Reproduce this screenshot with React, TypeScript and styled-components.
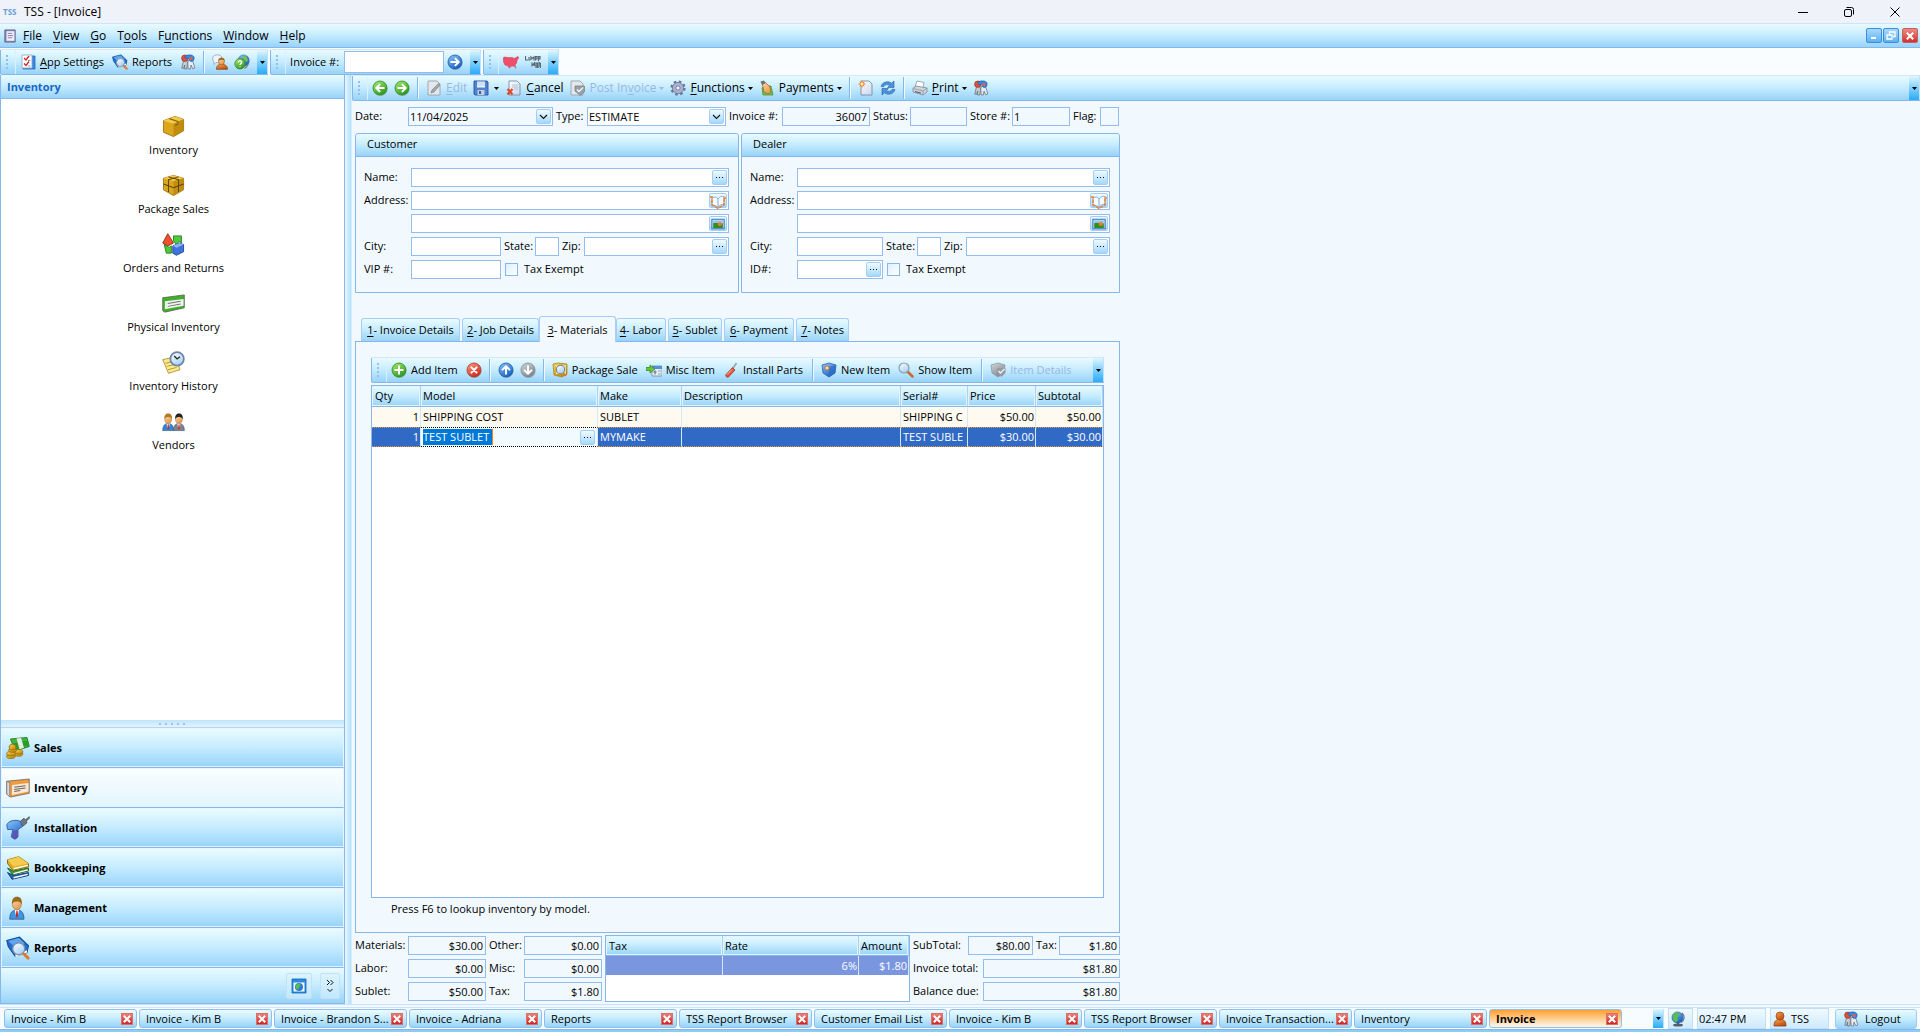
import React, { ReactNode } from "react";
import styled, { createGlobalStyle, css } from "styled-components";

const line = "#86b6ea";
const fieldLine = "#92bdee";
const pale = "#f1f9ff";
const bar = "linear-gradient(#e9fbff, #c6ecff 48%, #98d3f8)";
const uiFont = `"Open Sans", "Noto Sans", sans-serif`;

const GlobalStyle = createGlobalStyle`
  * { box-sizing: border-box; }
  html, body { margin: 0; height: 100%; }
  body { font: 11px/16px ${uiFont}; color: #000; background: ${pale}; overflow: hidden; }
  button, input, select { font: inherit; color: inherit; margin: 0; padding: 0; border: 0; background: none; border-radius: 0; outline: 0; }
  button { white-space: nowrap; }
  svg { display: block; flex: none; }
  u { text-underline-offset: 2px; }
`;

/* ---------- icons ---------- */

const Defs = () => (
  <svg width="0" height="0" style={{ position: "absolute" }} aria-hidden="true">
    <defs>
      {[
        ["gGreen", "#a9ee74", "#2f9a1d"],
        ["gBlue", "#8cc8fb", "#1c62c4"],
        ["gRed", "#ff9d85", "#cf2c1a"],
        ["gGray", "#d4d8dc", "#7f868d"],
        ["gGold", "#f9d65c", "#c48a0a"],
        ["gSkin", "#ffd9a8", "#e59a4f"],
        ["gOrange", "#f7a64b", "#bf4f14"],
        ["gPaper", "#ffffff", "#cfdcef"],
        ["gLens", "#ffffff", "#a8d2f4"],
      ].map(([id, a, b]) => (
        <linearGradient key={id} id={id} x1="0" y1="0" x2="0.6" y2="1">
          <stop offset="0" stopColor={a} />
          <stop offset="1" stopColor={b} />
        </linearGradient>
      ))}
    </defs>
  </svg>
);

const disc = (fill: string, edge: string, mark: string, turn = 0) => (
  <>
    <circle cx="8.5" cy="9" r="7" fill="#5b6b7a" opacity=".35" />
    <circle cx="8" cy="8" r="7" fill={`url(#${fill})`} stroke={edge} strokeWidth=".8" />
    <path d={mark} transform={`rotate(${turn} 8 8)`} fill="none" stroke="#fff" strokeWidth="2" strokeLinejoin="round" strokeLinecap="round" />
  </>
);
const arrowMark = "M4.2 8h7.4M8.4 4.6 11.8 8l-3.4 3.4";
const sheet = (
  <path d="M3 1h8l3 3v11H3z" fill="url(#gPaper)" stroke="#7c8ba3" strokeWidth=".9" />
);
const graySheet = <path d="M2 1h9l3 3v11H2z" fill="#e4e8ec" stroke="#9aa2ab" strokeWidth=".9" />;
const person = (x: number, hair: string, coat: string, s = 1, y = 0) => (
  <g transform={`translate(${x} ${y}) scale(${s})`}>
    <path d="M0 15c0-4 1.6-6 4.6-6s4.6 2 4.6 6z" fill={coat} stroke="#34507a" strokeWidth=".5" />
    <path d="M3.2 9h2.800l-.8 4h-1.2z" fill="#fff" />
    <path d="M4.3 9.6h.8l.3 3.4-.8 1-.7-1z" fill="#c8281c" />
    <ellipse cx="4.6" cy="5.4" rx="2.9" ry="3.5" fill="url(#gSkin)" stroke="#b06e2c" strokeWidth=".4" />
    <path d="M1.5 5.4C1.100 2.200 2.600.5 4.700.5s3.600 1.700 3.100 4.900C7 4 6 3.400 4.800 3.600 3.400 3.600 2 4 1.500 5.400z" fill={hair} />
  </g>
);

const ICONS: Record<string, ReactNode> = {
  checklist: (
    <>
      <path d="M3 2h12v13H3z" fill="#3d8be0" stroke="#2567b5" strokeWidth=".8" />
      <path d="M2 1h10v13H2z" fill="#fbfdff" stroke="#8aa5c8" strokeWidth=".8" />
      <path d="m4 4 2 2 3-4M4 9.500l2 2 3-4" fill="none" stroke="#d3261d" strokeWidth="1.300" />
      <path d="M8 6.500h2.500M8 12h2.500" stroke="#8c9bb0" />
    </>
  ),
  report: (
    <>
      <path d="M.5 3 9 .8l6 5.700L14 11l-8 2.500L1.500 7z" fill="#1f6fd0" stroke="#154c94" strokeWidth=".7" />
      <path d="m1.500 3.300 7-2 4 3.700-7 2z" fill="#5ea7f0" />
      <path d="m6 12.500 8-3v1.500l-7.500 2.800z" fill="#fff" />
      <circle cx="8.500" cy="8.500" r="4" fill="url(#gLens)" stroke="#7d93ac" strokeWidth=".9" />
      <path d="m12 12 2.700 2.700" stroke="#e2772b" strokeWidth="2" strokeLinecap="round" />
    </>
  ),
  team: (
    <>
      <path d="M3.500 6.500 6.800 6l.7 3-.7 6H4.600V11l-1 3.500-1.800-.4z" fill="#c6ccd3" stroke="#5f6975" strokeWidth=".7" />
      <path d="m8.500 6.500 4-.5 2.300 8-2 .8L11 11l-.6 4H8.300L7.700 9z" fill="#e9edf0" stroke="#5f6975" strokeWidth=".7" />
      <circle cx="4.800" cy="4.200" r="3.200" fill="#e0503a" stroke="#8e2a1a" strokeWidth=".6" />
      <path d="M5 2.500C6 .5 13 0 14 3c.6 2-.6 4.600-2.600 4.600C9 7.600 9.800 4 7.600 4.600 6 5 4.600 4 5 2.500z" fill="#2f8be2" stroke="#1a549c" strokeWidth=".6" />
      <circle cx="11" cy="4.400" r="1.600" fill="#e95c48" />
    </>
  ),
  chatUser: (
    <>
      <path d="M.6 4.500c0-5 9.400-5 9.400 0s-4 4-6 4l-2 2V8C1.200 7 .6 6 .6 4.500z" fill="#eef3fa" stroke="#8798b4" strokeWidth=".7" />
      <path d="M4.500 15.300c0-4 2-5 5-5s6 1 6 5z" fill="url(#gOrange)" stroke="#8c3c10" strokeWidth=".7" />
      <ellipse cx="9.500" cy="7.200" rx="3" ry="3.500" fill="url(#gSkin)" stroke="#a55d1c" strokeWidth=".6" />
      <path d="M6.400 6.800c0-3.600 6.200-3.600 6.200 0-2-1.300-4.200-1.300-6.200 0z" fill="#9a621f" />
    </>
  ),
  globeHelp: (
    <>
      <path d="M12.500 2c3.500 3 3 9-2 12.500" fill="none" stroke="#7c8894" strokeWidth="1.400" />
      <circle cx="9.500" cy="6.500" r="5.500" fill="url(#gBlue)" stroke="#3c6da8" strokeWidth=".7" />
      <path d="M9 1.200c3 .5 5 3 4.500 6.500L11 7 9 4z" fill="#72c44e" />
      <circle cx="6" cy="9.800" r="5.200" fill="url(#gGreen)" stroke="#2e7f1f" strokeWidth=".7" />
      <path d="M4.400 8.400c0-2.200 3.400-2 3.200 0 0 1.200-1.600 1.200-1.600 2.600M6 12.400v.8" fill="none" stroke="#fff" strokeWidth="1.400" />
    </>
  ),
  goBlue: disc("gBlue", "#1c559e", arrowMark),
  upBlue: disc("gBlue", "#1c559e", arrowMark, -90),
  downGray: disc("gGray", "#7f868d", arrowMark, 90),
  back: disc("gGreen", "#2b8a1c", arrowMark, 180),
  forward: disc("gGreen", "#2b8a1c", arrowMark),
  add: disc("gGreen", "#2b8a1c", "M8 4.200v7.600M4.200 8h7.600"),
  remove: disc("gRed", "#a83222", "m5.400 5.400 5.200 5.200M10.600 5.400l-5.200 5.200"),
  usa: (
    <path d="M0 4.500 1 3l5 .6 3.500-.2 1.500 1.200L15 2.500l.8 1.300L14.200 6l-.6 3L12 11l1 3.300L11 12l-3 .2-1.600 2L5 12 2 11 .5 8z" fill="#ee4f68" stroke="#d43a55" strokeWidth=".5" />
  ),
  express: (
    <g fill="none" stroke="#5c6873" strokeWidth="1.200">
      <path d="M.5 2v4H3M4 3v3h1.500M6 6V3l1.500 1.500L9 3v3.500M10.500 6.500v-4H12V5h-1.500M13.500 7V2.500H15V5h-1.500" />
      <path d="M7 8.500v3l1.500-1.500 1 2v-4M11 14V9h1.500v5M11 12h1.500M14 14V8.500l1.500 1V14" />
    </g>
  ),
  edit: (
    <>
      {graySheet}
      <path d="M12.500 3.500 6 10l-1 3 3-1 6-7z" fill="#a4abb3" stroke="#79818a" strokeWidth=".7" />
    </>
  ),
  save: (
    <>
      <path d="M1 1h13l1 1v13H2l-1-1z" fill="#4f83cf" stroke="#28549c" strokeWidth=".9" />
      <path d="M4 1.500h8v6H4z" fill="#eaf3ff" />
      <path d="M4 3h8M4 5h8" stroke="#9ebbe2" strokeWidth=".7" />
      <path d="M4.500 10h7v5h-7z" fill="#c3cddb" />
      <path d="M6 11h2v3H6z" fill="#3a5f9a" />
    </>
  ),
  cancelDoc: (
    <>
      {sheet}
      <path d="M6 5h6M6 7h6M8 9h4" stroke="#a8b5c9" strokeWidth=".8" />
      <path d="m1.500 9 5 5.500M6.500 9l-5 5.500" stroke="#e04a2c" strokeWidth="2.200" />
    </>
  ),
  post: (
    <>
      {graySheet}
      <path d="M6 6h9l1 1v4l-4.600 4.500L6 11z" fill="#98a1aa" stroke="#6f7983" strokeWidth=".7" />
      <path d="m8 9.500 2 2 4-4" fill="none" stroke="#f2f5f7" strokeWidth="1.400" />
    </>
  ),
  gear: (
    <>
      <circle cx="8" cy="8" r="6.300" fill="none" stroke="#6b7495" strokeWidth="2.600" strokeDasharray="2.500 2.450" />
      <circle cx="8" cy="8" r="5.600" fill="#aab2cf" stroke="#6b7495" strokeWidth=".8" />
      <circle cx="8" cy="8" r="2.100" fill="#eef4fb" stroke="#6b7495" strokeWidth=".8" />
    </>
  ),
  payHand: (
    <>
      <path d="m3 8 2-2h7l2 9H4z" fill="#6fc343" stroke="#3f8d22" strokeWidth=".7" />
      <path d="m3 3 3-1 5 5 1 5-3 2-4-2-1-5z" fill="url(#gSkin)" stroke="#a6662c" strokeWidth=".8" />
      <path d="M1.500 1.500 5 .6l1.500 2.600L3 5z" fill="#6b737c" />
    </>
  ),
  newDoc: (
    <>
      {sheet}
      <circle cx="4" cy="4" r="2.600" fill="#ffb648" />
      <path d="M4 .5v7M.5 4h7M1.700 1.700l4.600 4.600M6.300 1.700 1.700 6.300" stroke="#f0612f" strokeWidth=".7" />
      <circle cx="4" cy="4" r="1.400" fill="#fff2ae" />
    </>
  ),
  refresh: (
    <g fill="#4b93dc" stroke="#27609f" strokeWidth=".6">
      <path d="M1 6.500C2 2 8 .4 11.500 3.200L14 1v6.500H7.600L9.600 5.300C7.500 4 4.600 4.500 3.800 6.800z" />
      <path d="M15 9.500C14 14 8 15.600 4.500 12.800L2 15V8.500h6.400l-2 2.200c2.100 1.300 5 .8 5.800-1.500z" />
    </g>
  ),
  print: (
    <>
      <path d="M3 7 5 1l7 1.500L11 8z" fill="#fff" stroke="#8d97a5" strokeWidth=".8" />
      <path d="M1 8l3-2 11 2v4l-4 3L1 12z" fill="#d0d5db" stroke="#7f8893" strokeWidth=".8" />
      <path d="m1 8.500 10 2.500 4-3M11 11v4" fill="none" stroke="#8a939e" strokeWidth=".8" />
      <path d="M3 11.500l6 1.600" stroke="#4b5460" />
    </>
  ),
  packageFind: (
    <>
      <path d="m1 2 5-1 9 1v10l-5 3-8-2z" fill="url(#gGold)" stroke="#a87a10" strokeWidth=".7" />
      <path d="M4 3h10v9H4z" fill="#f3dc9a" />
      <circle cx="8.500" cy="7.500" r="4.200" fill="url(#gLens)" stroke="#6f8296" strokeWidth="1.100" />
      <path d="m11.500 11 2.500 3" stroke="#e2772b" strokeWidth="1.800" />
    </>
  ),
  misc: (
    <>
      <path d="M6 4h10v10H6z" fill="#e9eff8" stroke="#6c7d97" strokeWidth=".7" />
      <path d="M6 4h10v3H6z" fill="#4f8fdc" />
      <path d="M8 9h2v2H8zM8 12h2M12 9h3M12 12h3" fill="#8fa3bd" stroke="#6c7d97" strokeWidth=".7" />
      <path d="M0 5.500h4V3l5 4-5 4V8.500H0z" fill="#67c43b" stroke="#2d861b" strokeWidth=".7" />
    </>
  ),
  tool: (
    <>
      <path d="M13.500 1 9 7.500" stroke="#9aa4af" strokeWidth="1.700" />
      <path d="M9.500 5.500 12 8 5.500 15c-1.500 1-3.500-1-2.500-2.500z" fill="#e4553d" stroke="#97301f" strokeWidth=".7" />
      <path d="m9 7.500-5 5" stroke="#ffb7a6" />
    </>
  ),
  cubeNew: (
    <>
      <path d="M1 3 8 1l7 2-1 8-6 4-6-4z" fill="url(#gBlue)" stroke="#225394" strokeWidth=".7" />
      <path d="m8 5 7-2-1 8-6 4z" fill="#2c6cc4" opacity=".7" />
      <path d="M6 3v6M3 6h6M4 4l4 4M8 4 4 8" stroke="#f0612f" strokeWidth=".9" />
      <circle cx="6" cy="6" r="1.600" fill="#ffe08a" />
    </>
  ),
  cubeGray: (
    <>
      <path d="M1 3 8 1l7 2-1 8-6 4-6-4z" fill="url(#gGray)" stroke="#8a9199" strokeWidth=".7" />
      <path d="M7 6h8.500v5l-4 4L7 11z" fill="#949ca4" />
      <path d="m8.500 9 2 2 4-4" fill="none" stroke="#eef1f3" strokeWidth="1.300" />
    </>
  ),
  search: (
    <>
      <path d="m9.500 9.500 5 5" stroke="#c96b2b" strokeWidth="2.500" strokeLinecap="round" />
      <circle cx="6" cy="6" r="5" fill="url(#gLens)" stroke="#8b9cae" strokeWidth="1.200" />
    </>
  ),
  box: (
    <>
      <path d="m1 4 8-3 6 2v8l-7 4-7-3z" fill="#dba51c" stroke="#9a7008" strokeWidth=".6" />
      <path d="m1 4 7 2 7-3-6-2z" fill="#f2ca4e" />
      <path d="m8 6 7-3v8l-7 4z" fill="#c28c10" />
      <path d="m5 2.500 6 2v2l-2 .8" fill="none" stroke="#8f6908" strokeWidth=".9" />
    </>
  ),
  boxTied: (
    <>
      <path d="m1 3 7-2 7 2v8l-7 4-7-4z" fill="#dba51c" stroke="#9a7008" strokeWidth=".6" />
      <path d="m1 3 7 2 7-2-7-2z" fill="#f2ca4e" />
      <path d="m8 5 7-2v8l-7 4z" fill="#c28c10" />
      <path d="M1 7l7 2.500L15 7M4.500 2l7 2v8.500M11.500 2l-7 2v8.500" fill="none" stroke="#5e4508" strokeWidth=".7" />
    </>
  ),
  orders: (
    <>
      <path d="M4 .5 8 7l-4 2-3.500-2z" fill="#f0522f" stroke="#8f2411" strokeWidth=".6" />
      <path d="M8 5.500 8 2h5.500v5L12 5.800 10 8z" fill="#4ecb3a" stroke="#1c7a12" strokeWidth=".6" />
      <path d="M1.500 8 5 10l1.500-1v5H3z" fill="#4ecb3a" stroke="#1c7a12" strokeWidth=".6" />
      <path d="m7.500 9 4.500-2 3 1v5l-5 2.500-2.500-1.500z" fill="#3e74dc" stroke="#1c3f94" strokeWidth=".6" />
      <path d="m7.500 9 2.700 1.200L15 8l-3-1z" fill="#8db4f5" />
    </>
  ),
  physical: (
    <>
      <path d="M.5 4 15.500 2v9L2 14 .5 13z" fill="#3fae28" stroke="#5c6a58" strokeWidth=".6" />
      <path d="M2 6.500 15 4.800v4.700L2 12z" fill="#eef3ee" />
      <path d="m4 8 9-1.500M4 10l9-1.700" stroke="#6d756d" strokeWidth=".7" />
    </>
  ),
  history: (
    <>
      <path d="m.5 6 9-2 3 9-8 2.500z" fill="#fbe98c" stroke="#a68f2b" strokeWidth=".6" />
      <path d="m2.500 8.500 6-1.500M3.300 10.700l6-1.500M4.200 13l6-1.600" stroke="#b09a3e" strokeWidth=".7" />
      <circle cx="10.500" cy="5.500" r="4.700" fill="url(#gLens)" stroke="#6c85ab" strokeWidth="1.200" />
      <path d="m8.500 3.500 2 2 2-1.500" fill="none" stroke="#222" strokeWidth=".9" />
    </>
  ),
  vendors: (
    <>
      {person(0.5, "#b37a26", "#2f86d6", 0.82, 2)}
      {person(8, "#222", "#7f8288", 0.82, 2)}
    </>
  ),
  manager: person(2.5, "#9a6a1c", "#3d96e4", 1.03),
  sales: (
    <>
      <path d="M3 2 14 1l1.500 6L6 10z" fill="#3fb53a" stroke="#1f7a1d" strokeWidth=".6" />
      <path d="m4 5 10.500-2 1 3-9 3z" fill="#2a9c2a" />
      <path d="m7 1.600 3-.3 2 6.500-3 1z" fill="#e6ebe4" />
      <g fill="url(#gGold)" stroke="#94690a" strokeWidth=".5">
        <ellipse cx="8.500" cy="12" rx="2.700" ry="1.500" />
        <ellipse cx="8.500" cy="10.500" rx="2.700" ry="1.500" />
        <ellipse cx="3.300" cy="13.500" rx="2.900" ry="1.500" />
        <ellipse cx="3.300" cy="11.800" rx="2.900" ry="1.500" />
        <ellipse cx="4.300" cy="9.500" rx="2.600" ry="1.400" />
        <ellipse cx="4.300" cy="7.500" rx="2.300" ry="2" />
      </g>
    </>
  ),
  inventory: (
    <>
      <path d="M.5 3.500 15.500 2v9.500L3 14 .5 12z" fill="#f29a3e" stroke="#77706a" strokeWidth=".6" />
      <path d="m.5 3.500 2 1V14l-2-2z" fill="#d8dce0" stroke="#77706a" strokeWidth=".5" />
      <path d="M4 6 15 4.600v5.800L4 12.600z" fill="#f7e8d5" />
      <path d="m5.500 7.500 7.500-1M5.500 9l7.500-1M5.500 10.400l4-.7" stroke="#6b6560" strokeWidth=".7" />
    </>
  ),
  drill: (
    <>
      <path d="m9 4 3-2.500 1 1 2.500-2L16 1l-2.500 2.500.500 1L11 7z" fill="#70767d" stroke="#41464c" strokeWidth=".5" />
      <path d="M.5 6C1 3.500 6 2 9.500 3.500L11 7 8 9v5l-2 1.500-2.500-1.500 1-5L1 9z" fill="url(#gBlue)" stroke="#3a5ba5" strokeWidth=".6" />
      <path d="M5 9.500h3V14l-2 1.500-2-1z" fill="#5a56b4" />
    </>
  ),
  books: (
    <>
      <path d="m1 11 3 4.500 11-2.500v-2L5 13z" fill="#245fb4" stroke="#153b73" strokeWidth=".6" />
      <path d="m1 8 3.500 4.500L15 10V8L5 10z" fill="#3b9c34" stroke="#1d661b" strokeWidth=".6" />
      <path d="m5 14.500 9.500-2.300M5 11.700l9.500-2.400" stroke="#fff" strokeWidth=".9" />
      <path d="M1 2.500 8.500.5 15 5v2.300L4.500 9.500 1 5z" fill="#e3a91e" stroke="#8a6108" strokeWidth=".6" />
      <path d="m1 2.500 7.500-2L15 5 5 7z" fill="#f5cb4d" />
      <path d="m5 8.500 9.500-2.200" stroke="#fff" strokeWidth=".9" />
    </>
  ),
  web: (
    <>
      <path d="M1 1h14v14H1z" fill="#2a8ae4" stroke="#1462b4" strokeWidth=".8" />
      <path d="M2.500 4.500h11v9h-11z" fill="#f4faff" />
      <circle cx="8" cy="9" r="4" fill="#3079cf" />
      <path d="M6 6c2-1 4 0 3.500 2L8 9l-1 3C4.500 11 4 8 6 6z" fill="#58bf4a" />
    </>
  ),
  globe: (
    <>
      <ellipse cx="8" cy="14" rx="5" ry="1.600" fill="#55606c" />
      <path d="M7 11h2v3H7z" fill="#55606c" />
      <path d="M12 2c3 3 3 7-1 9.500" fill="none" stroke="#6b7683" strokeWidth="1.200" />
      <circle cx="7.500" cy="6.500" r="5.500" fill="url(#gBlue)" stroke="#1b4c8c" strokeWidth=".6" />
      <path d="M5 2c2-1 4 0 4.500 2L7 6.500 8 9l-2 2.500C2 9 2 4 5 2z" fill="#55c04a" />
    </>
  ),
  user: (
    <>
      <path d="M2 15c0-5 2-6.500 6-6.500s6 1.500 6 6.500z" fill="url(#gOrange)" stroke="#8c3c10" strokeWidth=".8" />
      <circle cx="8" cy="5" r="4" fill="url(#gOrange)" stroke="#a04a12" strokeWidth=".8" />
    </>
  ),
  book: (
    <>
      <path d="M2 4c3-1.500 4.500-1 6 1 2-2.500 3.500-3 6-2.500v8c-3-.4-4.500.5-6 3-2-2-3.500-2.500-6-1.500z" fill="#f8fbff" stroke="#7ba4d8" strokeWidth=".8" />
      <path d="M8 5v8.500" stroke="#7ba4d8" />
      <path d="M0 3h2v7.500l6 4 6-3.500V2.500M14 5l2-1.500" fill="none" stroke="#ee7f28" strokeWidth="1.500" strokeDasharray="3.500 1" />
    </>
  ),
  photo: (
    <>
      <path d="M1 2.500h14v11H1z" fill="#cfe4fa" stroke="#3d74b8" strokeWidth="1.200" />
      <path d="M2.500 7c4-2 7 1 11 0v5.500h-11z" fill="#2f8e20" />
      <path d="M2.500 4h11v2.500h-11z" fill="#8cc3f3" />
      <circle cx="10" cy="8" r="2.400" fill="#ee7d2b" />
    </>
  ),
  doc: (
    <>
      <path d="M2 1h12v14H2z" fill="#8383ae" stroke="#5c5c86" strokeWidth=".8" />
      <path d="M4 2.500h9v11H4z" fill="#f0f0fa" />
      <path d="M5.500 5h5M5.500 7.500h6M5.500 10h5" stroke="#7474a4" />
    </>
  ),
};

const Icon = ({ name, size = 16 }: { name: string; size?: number }) => (
  <svg width={size} height={size} viewBox="0 0 16 16" aria-hidden="true">
    {ICONS[name]}
  </svg>
);

const Caret = () => (
  <svg width="5" height="3" viewBox="0 0 5 3" aria-hidden="true">
    <path d="M0 0h5L2.500 3z" fill="currentColor" />
  </svg>
);

const Chevron = () => (
  <svg width="9" height="6" viewBox="0 0 9 6" aria-hidden="true">
    <path d="M1 1l3.500 3.500L8 1" fill="none" stroke="#111" strokeWidth="1.100" />
  </svg>
);

const Cross = () => (
  <svg width="8" height="8" viewBox="0 0 8 8" aria-hidden="true">
    <path d="m.8.8 6.400 6.400M7.200.8.8 7.200" stroke="#fff" strokeWidth="2" />
  </svg>
);

/** "_File" -> underlined F followed by "ile". */
const Hot = ({ text }: { text: string }) => {
  const at = text.indexOf("_");
  if (at < 0) return <>{text}</>;
  return (
    <span>
      {text.slice(0, at)}
      <u>{text[at + 1]}</u>
      {text.slice(at + 2)}
    </span>
  );
};

/* ---------- window frame ---------- */

const Window = styled.div`
  display: flex;
  flex-direction: column;
  height: 100vh;
`;

const TitleBar = styled.header`
  display: flex;
  align-items: center;
  height: 23px;
  padding: 0 2px 0 3px;
  background: #f0f2f9;
`;
const Logo = styled.b`
  width: 21px;
  font: bold 8px/16px ${uiFont};
  color: #6a9fd6;
`;
const Title = styled.h1`
  flex: 1;
  margin: 0;
  font: 12px/16px ${uiFont};
`;
const WinButton = styled.button`
  display: grid;
  place-items: center;
  width: 46px;
  height: 22px;
`;

const MenuBar = styled.nav`
  display: flex;
  align-items: center;
  gap: 1px;
  height: 25px;
  padding: 0 2px 0 3px;
  background: ${bar};
  border-top: 1px solid #cfe4f7;
  border-bottom: 1px solid ${line};
`;
const MenuItem = styled.button`
  padding: 0 5px;
  font-size: 12px;
`;
const MdiGroup = styled.div`
  display: flex;
  gap: 1px;
  margin-left: auto;
`;
const MdiButton = styled.button<{ $danger?: boolean }>`
  display: grid;
  place-items: center;
  width: 16px;
  height: 15px;
  border: 1px solid ${(p) => (p.$danger ? "#c4605c" : "#3b8ede")};
  border-radius: 2px;
  margin-left: ${(p) => (p.$danger ? 2 : 0)}px;
  background: ${(p) => (p.$danger ? "linear-gradient(#ee8a84, #d22f2f)" : "linear-gradient(#a8d8fa, #5fb2f2)")};
`;

const ToolRow = styled.div`
  display: flex;
  gap: 2px;
  height: 27px;
  padding-top: 1px;
  background: #fafdff;
`;
const Toolbar = styled.div<{ $small?: boolean }>`
  display: flex;
  align-items: stretch;
  flex: none;
  height: 26px;
  font-size: ${(p) => (p.$small ? 11 : 12)}px;
  background: ${bar};
  border-top: 1px solid #d3e7f8;
  border-bottom: 1px solid ${line};
  border-radius: 2px 0 0 2px;
`;
const Grip = styled.div`
  flex: none;
  width: 16px;
  margin-right: 1px;
  border-right: 1px solid #d9f1ff;
  border-left: 1px solid ${line};
  background: repeating-linear-gradient(#93bfea 0 2px, transparent 2px 4px) 5px 5px / 2px 15px no-repeat;
`;
const ToolItem = styled.button<{ $roomy?: boolean }>`
  display: flex;
  align-items: center;
  gap: 4px;
  padding: 0 ${(p) => (p.$roomy ? 5 : 3)}px 0 3px;
  &:disabled { color: #97b8e2; }
`;
const DropMark = styled.span<{ $far?: boolean }>`
  margin: 0 ${(p) => (p.$far ? 1 : 0)}px 0 ${(p) => (p.$far ? 1 : -1)}px;
`;
const Rule = styled.span`
  flex: none;
  width: 2px;
  margin: 1px 4px;
  background: linear-gradient(90deg, ${line} 50%, #eefaff 50%);
`;
const More = styled.button<{ $apart?: boolean }>`
  display: grid;
  place-items: center;
  flex: none;
  width: 11px;
  margin-left: ${(p) => (p.$apart ? "4px" : "auto")};
  border-right: 1px solid #bfe2fa;
  background: linear-gradient(#e0f7ff, #7fd0fc 50%, #2aabf8);
`;
const QuickLabel = styled.label`
  display: flex;
  align-items: center;
  gap: 5px;
  padding-left: 3px;
`;
const QuickInput = styled.input`
  width: 100px;
  height: 22px;
  background: #fff;
  border: 1px solid ${fieldLine};
`;

type Tool = { icon?: string; text?: string; off?: boolean; drop?: boolean; rule?: boolean };
const Tools = ({ items, roomy }: { items: Tool[]; roomy?: boolean }) => (
  <>
    {items.map((t, i) =>
      t.rule ? (
        <Rule key={i} />
      ) : (
        <ToolItem key={i} type="button" disabled={t.off} $roomy={roomy && !!t.text} aria-label={t.text ? undefined : t.icon}>
          {t.icon && <Icon name={t.icon} />}
          {t.text && <Hot text={t.text} />}
          {t.drop && <DropMark $far={!t.text}><Caret /></DropMark>}
        </ToolItem>
      )
    )}
  </>
);

/* ---------- side bar ---------- */

const Body = styled.div`
  display: flex;
  flex: 1;
  min-height: 0;
`;
const Side = styled.aside`
  display: flex;
  flex-direction: column;
  flex: none;
  width: 345px;
  background: #fff;
  border-left: 1px solid ${line};
  border-right: 1px solid ${line};
`;
const SideTitle = styled.h2`
  flex: none;
  height: 24px;
  margin: 0;
  padding-left: 6px;
  font: bold 11px/24px ${uiFont};
  color: #1a66c4;
  background: ${bar};
  border-bottom: 1px solid ${line};
`;
const Shortcuts = styled.div`
  display: flex;
  flex-direction: column;
  align-items: center;
  flex: 1;
  min-height: 0;
  padding: 16px 0 0 2px;
`;
const Shortcut = styled.button`
  display: flex;
  flex-direction: column;
  align-items: center;
  gap: 4px;
  height: 59px;
`;
const SideGrip = styled.div`
  display: flex;
  justify-content: center;
  align-items: center;
  gap: 4px;
  flex: none;
  height: 8px;
  padding-right: 2px;
  background: linear-gradient(#bfe5fc, #e0f4ff);
  border-bottom: 1px solid #b5d5f4;
  i { width: 2px; height: 2px; background: #9cc3ea; }
`;
const Group = styled.button<{ $active?: boolean }>`
  display: flex;
  align-items: center;
  gap: 4px;
  flex: none;
  height: 40px;
  padding-left: 4px;
  font-weight: bold;
  background: ${(p) => (p.$active ? "linear-gradient(#fbfeff, #e2f5ff)" : bar)};
  border: 1px solid #e6f6ff;
  border-bottom-color: ${line};
  box-shadow: inset 0 -1px #dff3ff;
`;
const SideFoot = styled.div`
  display: flex;
  justify-content: flex-end;
  align-items: center;
  gap: 8px;
  flex: none;
  height: 36px;
  padding-right: 4px;
  background: ${bar};
  border-bottom: 1px solid ${line};
`;
const FootButton = styled.button<{ $narrow?: boolean }>`
  display: grid;
  place-items: center;
  width: ${(p) => (p.$narrow ? 20 : 26)}px;
  height: 26px;
  border: 1px solid #c2e0f7;
  border-radius: 2px;
  background: linear-gradient(#dbf4ff, #c2e8fe);
`;
const Splitter = styled.div`
  flex: none;
  width: 7px;
  background: linear-gradient(90deg, #eaf7ff, #b2e0fd);
  border-right: 1px solid #d6ecfb;
`;

/* ---------- invoice form ---------- */

const Work = styled.main`
  display: flex;
  flex-direction: column;
  flex: 1;
  min-width: 0;
`;
const Form = styled.form`
  display: flex;
  flex-direction: column;
  flex: 1;
  min-height: 0;
  width: 100%;
  max-width: 768px;
  padding: 6px 0 2px 3px;
`;
const FieldRow = styled.div`
  display: flex;
  align-items: center;
  gap: 3px;
  flex: none;
  height: 19px;
`;
const Label = styled.label<{ $w?: number }>`
  flex: none;
  width: ${(p) => (p.$w ? p.$w + "px" : "auto")};
  padding-bottom: 2px;
  white-space: nowrap;
`;
const boxCss = css<{ $w?: number; $flat?: boolean }>`
  display: flex;
  align-items: center;
  flex: ${(p) => (p.$w ? "none" : "1 1 0")};
  width: ${(p) => (p.$w ? p.$w + "px" : "auto")};
  min-width: 0;
  height: 19px;
  border: 1px solid ${fieldLine};
  background: ${(p) => (p.$flat ? pale : "#fff")};
`;
const Box = styled.span`
  ${boxCss}
  padding-right: 1px;
`;
const TextInput = styled.input<{ $right?: boolean }>`
  flex: 1;
  width: 100%;
  min-width: 0;
  padding: 0 1px;
  text-align: ${(p) => (p.$right ? "right" : "left")};
`;
const Select = styled.select`
  flex: 1;
  min-width: 0;
  appearance: none;
  padding-left: 1px;
`;
const MiniButton = styled.button<{ $wide?: boolean }>`
  display: grid;
  place-items: center;
  flex: none;
  width: ${(p) => (p.$wide ? 18 : 15)}px;
  height: 15px;
  border: 1px solid #a3cdf3;
  border-radius: 2px;
  background: linear-gradient(#f0fbff, #a4d8fa);
`;
const SelectFace = styled.span`
  display: grid;
  flex: 1;
  align-items: center;
  > * { grid-area: 1 / 1; }
  > :last-child { justify-self: end; pointer-events: none; }
`;
const Arrow = styled.span`
  display: grid;
  place-items: center;
  width: 15px;
  height: 15px;
  border: 1px solid #a3cdf3;
  border-radius: 2px;
  background: linear-gradient(#f0fbff, #a4d8fa);
`;
const Tick = styled.input`
  appearance: none;
  flex: none;
  width: 13px;
  height: 13px;
  margin: 0 3px 0 1px;
  border: 1px solid ${line};
  background: linear-gradient(135deg, #dcefff, #fff);
`;

const Panels = styled.div`
  display: grid;
  grid-template-columns: 384fr 379fr;
  gap: 2px;
  flex: none;
  height: 160px;
  margin: 7px 0 23px;
`;
const Panel = styled.fieldset`
  display: flex;
  flex-direction: column;
  gap: 4px;
  min-width: 0;
  margin: 0;
  padding: 0 9px 0 8px;
  border: 1px solid ${line};
  border-radius: 3px 3px 0 0;
`;
const PanelTitle = styled.h3`
  flex: none;
  height: 23px;
  margin: 0 -9px 7px -8px;
  padding-left: 11px;
  font: 11px/20px ${uiFont};
  background: ${bar};
  border-bottom: 1px solid ${line};
  border-radius: 3px 3px 0 0;
`;

const TabStrip = styled.div`
  display: flex;
  align-items: flex-end;
  gap: 2px;
  flex: none;
  height: 26px;
  padding-left: 6px;
  margin-bottom: -1px;
`;
const Tab = styled.button<{ $w: number; $active?: boolean }>`
  width: ${(p) => p.$w}px;
  height: ${(p) => (p.$active ? 26 : 23)}px;
  margin: ${(p) => (p.$active ? "0 -2px" : "0 0 1px")};
  background: ${(p) => (p.$active ? pale : bar)};
  border: 1px solid #a9cdf2;
  border-bottom: 0;
  border-radius: 3px 3px 0 0;
  z-index: ${(p) => (p.$active ? 1 : 0)};
`;
const TabPage = styled.section`
  display: flex;
  flex-direction: column;
  flex: 1;
  min-height: 0;
  padding: 15px 15px 0;
  border: 1px solid ${line};
`;
const GridFrame = styled.div`
  flex: 1;
  min-height: 0;
  margin-top: 2px;
  background: #fff;
  border: 1px solid ${line};
`;
const Hint = styled.p`
  flex: none;
  height: 34px;
  margin: 0;
  padding: 3px 0 0 20px;
`;
const Table = styled.table<{ $headH?: number }>`
  width: 100%;
  table-layout: fixed;
  border-collapse: separate;
  border-spacing: 0;
  th, td { overflow: hidden; white-space: nowrap; padding: 0 1px 0 2px; }
  th {
    height: ${(p) => p.$headH ?? 21}px;
    padding-left: 2px;
    font-weight: normal;
    text-align: left;
    background: ${bar};
    border-right: 1px solid #a9d2f5;
    border-bottom: 1px solid ${line};
    box-shadow: inset 0 0 0 1px #e0f5ff;
  }
  th:first-child { padding-left: 3px; }
  td { height: 20px; border-right: 1px solid #d3e8fa; }
`;
const Row = styled.tr<{ $tone: "cream" | "picked" | "soft" }>`
  td {
    background: ${(p) => ({ cream: "#fffaf0", picked: "#316ac5", soft: "#7a96df" }[p.$tone])};
    color: ${(p) => (p.$tone === "cream" ? "#000" : "#fff")};
    ${(p) => p.$tone === "picked" && "border-top: 1px dotted #e09a3a; border-bottom: 1px dotted #e09a3a;"}
    ${(p) => p.$tone === "soft" && "height: 19px;"}
  }
`;
const Num = styled.td`
  text-align: right;
`;
const EditCell = styled.td`
  && { background: #f0faff; border-top: 1px dotted #000; border-bottom: 1px dotted #000; }
  div { display: flex; justify-content: space-between; align-items: center; padding-right: 1px; }
`;
const CellInput = styled.input`
  width: 70px;
  height: 16px;
  color: #fff;
  background: #0078d7;
  border-right: 1px solid #f08020;
`;

const Totals = styled.div`
  display: grid;
  grid-template-columns: 247px 306fr 207px;
  column-gap: 3px;
  flex: none;
  height: 67px;
  margin-top: 2px;
`;
const TotalStack = styled.div`
  display: flex;
  flex-direction: column;
  gap: 4px;
  padding-top: 1px;
`;
const TaxFrame = styled.div`
  background: #fff;
  border: 1px solid ${line};
`;

/* ---------- task bar ---------- */

const TaskBar = styled.footer`
  display: flex;
  align-items: stretch;
  flex: none;
  height: 28px;
  padding: 3px 2px 0;
  border-top: 1px solid #cbe3f8;
  background: linear-gradient(#f1f9ff 0 2px, #cde5f9 2px 3px, #f6fcff 3px 24px, ${line} 24px 25px, #8ccdf8 25px);
`;
const TaskTabs = styled.div`
  display: flex;
  gap: 2px;
  flex: 1;
  min-width: 0;
  padding: 1px 0 4px 2px;
`;
const TaskTab = styled.div<{ $active?: boolean }>`
  display: flex;
  align-items: center;
  flex: 0 1 133px;
  min-width: 0;
  padding: 0 3px 0 6px;
  border: 1px solid #8fbfee;
  border-radius: 3px;
  font-weight: ${(p) => (p.$active ? "bold" : "normal")};
  background: ${(p) => (p.$active ? "linear-gradient(#ff9f2e, #fff0dc 90%)" : bar)};
`;
const TaskName = styled.button`
  flex: 1;
  min-width: 0;
  overflow: hidden;
  text-align: left;
  font-weight: inherit;
`;
const Close = styled.button`
  display: grid;
  place-items: center;
  flex: none;
  width: 12px;
  height: 12px;
  border: 1px solid #e06c66;
  background: linear-gradient(#ee7d74, #cc2626);
`;
const StatusBox = styled.div<{ $w: number }>`
  display: flex;
  align-items: center;
  gap: 3px;
  flex: none;
  width: ${(p) => p.$w}px;
  height: 21px;
  margin-left: 4px;
  padding: 0 1px;
  border: 1px solid #c4def6;
  background: linear-gradient(#f0faff, #cfeafd);
`;
const Logout = styled.button`
  display: flex;
  align-items: center;
  gap: 6px;
  flex: none;
  width: 82px;
  height: 20px;
  margin: 1px 1px 0 6px;
  padding-left: 7px;
  border: 1px solid #a3cbf2;
  border-radius: 3px;
  background: ${bar};
`;

/* ---------- page parts ---------- */

const Field = ({ id, label, lw, w, value = "", flat, right, button }: {
  id: string; label: string; lw?: number; w?: number; value?: string; flat?: boolean; right?: boolean; button?: ReactNode;
}) => (
  <>
    <Label htmlFor={id} $w={lw}>{label}</Label>
    <Box $w={w} $flat={flat}>
      <TextInput id={id} defaultValue={value} readOnly={flat} $right={right} />
      {button}
    </Box>
  </>
);

const Dots = () => (
  <MiniButton type="button" aria-label="Browse">
    <svg width="7" height="1" viewBox="0 0 7 1" aria-hidden="true">
      <path d="M0 0h1v1H0zM3 0h1v1H3zM6 0h1v1H6z" fill="#111" />
    </svg>
  </MiniButton>
);

const Party = ({ title, prefix, cityW, last, lookup }: {
  title: string; prefix: string; cityW: number; last: string; lookup?: boolean;
}) => (
  <Panel aria-label={title}>
    <PanelTitle>{title}</PanelTitle>
    <FieldRow><Field id={prefix + "name"} label="Name:" lw={44} button={<Dots />} /></FieldRow>
    <FieldRow>
      <Field id={prefix + "addr"} label="Address:" lw={44}
        button={<MiniButton type="button" $wide aria-label="Address book"><Icon name="book" /></MiniButton>} />
    </FieldRow>
    <FieldRow>
      <Field id={prefix + "addr2"} label="" lw={44}
        button={<MiniButton type="button" $wide aria-label="Map"><Icon name="photo" size={14} /></MiniButton>} />
    </FieldRow>
    <FieldRow>
      <Field id={prefix + "city"} label="City:" lw={44} w={cityW} />
      <Field id={prefix + "state"} label="State:" lw={28} w={24} />
      <Field id={prefix + "zip"} label="Zip:" lw={19} button={<Dots />} />
    </FieldRow>
    <FieldRow>
      <Field id={prefix + "no"} label={last} lw={44} w={cityW} button={lookup && <Dots />} />
      <Tick type="checkbox" id={prefix + "exempt"} />
      <Label htmlFor={prefix + "exempt"}>Tax Exempt</Label>
    </FieldRow>
  </Panel>
);

const TASKS = [
  "Invoice - Kim B", "Invoice - Kim B", "Invoice - Brandon S...", "Invoice - Adriana", "Reports", "TSS Report Browser",
  "Customer Email List", "Invoice - Kim B", "TSS Report Browser", "Invoice Transaction...", "Inventory", "Invoice",
];
const SHORTCUTS = [
  ["box", "Inventory"], ["boxTied", "Package Sales"], ["orders", "Orders and Returns"],
  ["physical", "Physical Inventory"], ["history", "Inventory History"], ["vendors", "Vendors"],
];
const GROUPS = [
  ["sales", "Sales"], ["inventory", "Inventory"], ["drill", "Installation"],
  ["books", "Bookkeeping"], ["manager", "Management"], ["report", "Reports"],
];
const TABS: [string, number][] = [
  ["_1- Invoice Details", 99], ["_2- Job Details", 77], ["_3- Materials", 77], ["_4- Labor", 50],
  ["_5- Sublet", 54], ["_6- Payment", 70], ["_7- Notes", 53],
];

export default function App() {
  return (
    <Window>
      <GlobalStyle />
      <Defs />
      <TitleBar>
        <Logo>TSS</Logo>
        <Title>TSS - [Invoice]</Title>
        <WinButton aria-label="Minimize">
          <svg width="10" height="10"><path d="M0 5.500h10" stroke="#000" /></svg>
        </WinButton>
        <WinButton aria-label="Restore">
          <svg width="10" height="10" fill="none" stroke="#000">
            <rect x=".5" y="2.500" width="7" height="7" rx="1.500" />
            <path d="M2.500.5h5a2 2 0 0 1 2 2v5" />
          </svg>
        </WinButton>
        <WinButton aria-label="Close">
          <svg width="10" height="10"><path d="m.5.5 9 9M9.500.5l-9 9" stroke="#000" /></svg>
        </WinButton>
      </TitleBar>

      <MenuBar>
        <Icon name="doc" size={14} />
        {["_File", "_View", "_Go", "T_ools", "F_unctions", "_Window", "_Help"].map((m) => (
          <MenuItem key={m}><Hot text={m} /></MenuItem>
        ))}
        <MdiGroup>
          <MdiButton aria-label="Minimize child">
            <svg width="10" height="9"><path d="M2 7h5" stroke="#fff" strokeWidth="2" /></svg>
          </MdiButton>
          <MdiButton aria-label="Restore child">
            <svg width="10" height="9" fill="none" stroke="#fff" strokeWidth="1.300"><path d="M3.500 3V1H9v4.500H7M1 4h5v4H1z" /></svg>
          </MdiButton>
          <MdiButton $danger aria-label="Close child"><Cross /></MdiButton>
        </MdiGroup>
      </MenuBar>

      <ToolRow>
        <Toolbar $small>
          <Grip />
          <Tools roomy items={[
            { icon: "checklist", text: "_App Settings" }, { icon: "report", text: "Reports" }, { icon: "team" },
            { rule: true }, { icon: "chatUser" }, { icon: "globeHelp" },
          ]} />
          <More $apart aria-label="More"><Caret /></More>
        </Toolbar>
        <Toolbar $small>
          <Grip />
          <QuickLabel>Invoice #:<QuickInput /></QuickLabel>
          <Tools items={[{ icon: "goBlue" }]} />
          <More $apart aria-label="More"><Caret /></More>
        </Toolbar>
        <Toolbar $small>
          <Grip />
          <Tools items={[{ icon: "usa" }, { icon: "express" }]} />
          <More $apart aria-label="More"><Caret /></More>
        </Toolbar>
      </ToolRow>

      <Body>
        <Side>
          <SideTitle>Inventory</SideTitle>
          <Shortcuts>
            {SHORTCUTS.map(([icon, text]) => (
              <Shortcut key={text}><Icon name={icon} size={23} />{text}</Shortcut>
            ))}
          </Shortcuts>
          <SideGrip><i /><i /><i /><i /><i /></SideGrip>
          {GROUPS.map(([icon, text]) => (
            <Group key={text} $active={text === "Inventory"}><Icon name={icon} size={24} />{text}</Group>
          ))}
          <SideFoot>
            <FootButton aria-label="Web"><Icon name="web" /></FootButton>
            <FootButton $narrow aria-label="Configure buttons">
              <svg width="8" height="14" fill="none" stroke="#111">
                <path d="m1 1 2.500 2.500L1 6M4.500 1 7 3.500 4.500 6M1.500 10 4 12.500 6.500 10" />
              </svg>
            </FootButton>
          </SideFoot>
        </Side>
        <Splitter />

        <Work>
          <Toolbar>
            <Grip />
            <Tools items={[
              { icon: "back" }, { icon: "forward" }, { rule: true },
              { icon: "edit", text: "_Edit", off: true }, { icon: "save", drop: true }, { icon: "cancelDoc", text: "_Cancel" },
              { icon: "post", text: "Post In_voice", off: true, drop: true }, { icon: "gear", text: "_Functions", drop: true },
              { icon: "payHand", text: "Payments", drop: true }, { rule: true }, { icon: "newDoc" }, { icon: "refresh" },
              { rule: true }, { icon: "print", text: "_Print", drop: true }, { icon: "team" },
            ]} />
            <More aria-label="More"><Caret /></More>
          </Toolbar>

          <Form onSubmit={(e) => e.preventDefault()}>
            <FieldRow>
              <Field id="date" label="Date:" lw={50} w={145} value="11/04/2025" flat
                button={<MiniButton type="button" aria-label="Pick date"><Chevron /></MiniButton>} />
              <Label htmlFor="type" $w={28}>Type:</Label>
              <Box $w={139}>
                <SelectFace>
                  <Select id="type"><option>ESTIMATE</option></Select>
                  <Arrow><Chevron /></Arrow>
                </SelectFace>
              </Box>
              <Field id="invno" label="Invoice #:" lw={50} w={88} value="36007" flat right />
              <Field id="status" label="Status:" lw={34} w={57} flat />
              <Field id="store" label="Store #:" lw={39} w={58} value="1" flat />
              <Field id="flag" label="Flag:" lw={24} w={19} flat />
            </FieldRow>

            <Panels>
              <Party title="Customer" prefix="c-" cityW={90} last="VIP #:" />
              <Party title="Dealer" prefix="d-" cityW={86} last="ID#:" lookup />
            </Panels>

            <TabStrip role="tablist">
              {TABS.map(([text, w]) => (
                <Tab key={text} type="button" role="tab" $w={w} $active={text === "_3- Materials"}><Hot text={text} /></Tab>
              ))}
            </TabStrip>
            <TabPage>
              <Toolbar $small>
                <Grip />
                <Tools roomy items={[
                  { icon: "add", text: "Add Item" }, { icon: "remove" }, { rule: true }, { icon: "upBlue" }, { icon: "downGray" },
                  { rule: true }, { icon: "packageFind", text: "Package Sale" }, { icon: "misc", text: "Misc Item" },
                  { icon: "tool", text: "Install Parts" }, { rule: true }, { icon: "cubeNew", text: "New Item" },
                  { icon: "search", text: "Show Item" }, { rule: true }, { icon: "cubeGray", text: "Item Details", off: true },
                ]} />
                <More type="button" aria-label="More"><Caret /></More>
              </Toolbar>
              <GridFrame>
                <Table>
                  <colgroup>
                    <col style={{ width: 49 }} /><col style={{ width: 177 }} /><col style={{ width: 84 }} /><col />
                    <col style={{ width: 67 }} /><col style={{ width: 68 }} /><col style={{ width: 67 }} />
                  </colgroup>
                  <thead>
                    <tr>
                      {["Qty", "Model", "Make", "Description", "Serial#", "Price", "Subtotal"].map((h) => <th key={h}>{h}</th>)}
                    </tr>
                  </thead>
                  <tbody>
                    <Row $tone="cream">
                      <Num>1</Num><td>SHIPPING COST</td><td>SUBLET</td><td /><td>SHIPPING C</td><Num>$50.00</Num><Num>$50.00</Num>
                    </Row>
                    <Row $tone="picked">
                      <Num>1</Num>
                      <EditCell>
                        <div><CellInput aria-label="Model" defaultValue="TEST SUBLET" /><Dots /></div>
                      </EditCell>
                      <td>MYMAKE</td><td /><td>TEST SUBLE</td><Num>$30.00</Num><Num>$30.00</Num>
                    </Row>
                  </tbody>
                </Table>
              </GridFrame>
              <Hint>Press F6 to lookup inventory by model.</Hint>
            </TabPage>

            <Totals>
              <TotalStack>
                {[["Materials:", "$30.00", "Other:", "$0.00"], ["Labor:", "$0.00", "Misc:", "$0.00"], ["Sublet:", "$50.00", "Tax:", "$1.80"]].map(
                  ([a, av, b, bv]) => (
                    <FieldRow key={a}>
                      <Field id={"t-" + a} label={a} lw={50} w={78} value={av} flat right />
                      <Field id={"t2-" + b} label={b} lw={32} w={78} value={bv} flat right />
                    </FieldRow>
                  )
                )}
              </TotalStack>
              <TaxFrame>
                <Table $headH={20}>
                  <colgroup><col style={{ width: 117 }} /><col /><col style={{ width: 50 }} /></colgroup>
                  <thead><tr><th>Tax</th><th>Rate</th><th>Amount</th></tr></thead>
                  <tbody><Row $tone="soft"><td /><Num>6%</Num><Num>$1.80</Num></Row></tbody>
                </Table>
              </TaxFrame>
              <TotalStack>
                <FieldRow>
                  <Field id="sub" label="SubTotal:" lw={52} w={65} value="$80.00" flat right />
                  <Field id="tax" label="Tax:" lw={20} value="$1.80" flat right />
                </FieldRow>
                <FieldRow><Field id="total" label="Invoice total:" lw={67} value="$81.80" flat right /></FieldRow>
                <FieldRow><Field id="due" label="Balance due:" lw={67} value="$81.80" flat right /></FieldRow>
              </TotalStack>
            </Totals>
          </Form>
        </Work>
      </Body>

      <TaskBar>
        <TaskTabs>
          {TASKS.map((t, i) => (
            <TaskTab key={i} $active={i === TASKS.length - 1}>
              <TaskName>{t}</TaskName>
              <Close aria-label={"Close " + t}><Cross /></Close>
            </TaskTab>
          ))}
          <More aria-label="More windows"><Caret /></More>
        </TaskTabs>
        <StatusBox $w={25}><Icon name="globe" /></StatusBox>
        <StatusBox $w={69}>02:47 PM</StatusBox>
        <StatusBox $w={59}><Icon name="user" />TSS</StatusBox>
        <Logout><Icon name="team" />Logout</Logout>
      </TaskBar>
    </Window>
  );
}
